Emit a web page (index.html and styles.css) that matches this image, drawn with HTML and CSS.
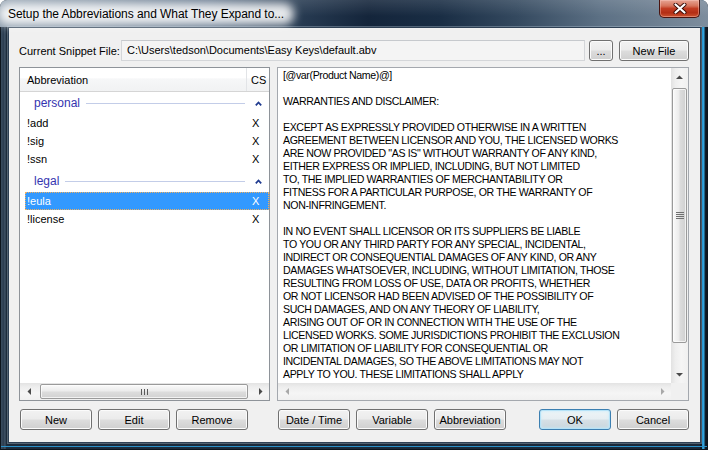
FILE: index.html
```html
<!DOCTYPE html>
<html>
<head>
<meta charset="utf-8">
<title>Setup the Abbreviations</title>
<link rel="stylesheet" href="styles.css">
</head>
<body>
<div class="window">
  <div class="titlebar">
    <span class="title">Setup the Abbreviations and What They Expand to...</span>
    <div class="close">
      <svg width="14" height="11" viewBox="0 0 14 11">
        <path d="M2.5 1.5 L11.5 9.5 M11.5 1.5 L2.5 9.5" stroke="#3a0b06" stroke-width="4" stroke-linecap="round" fill="none"/>
        <path d="M2.5 1.5 L11.5 9.5 M11.5 1.5 L2.5 9.5" stroke="#ffffff" stroke-width="2.2" stroke-linecap="round" fill="none"/>
      </svg>
    </div>
  </div>
  <div class="client">
    <div class="filerow">
      <span class="filelabel">Current Snippet File:</span>
      <div class="pathbox">C:\Users\tedson\Documents\Easy Keys\default.abv</div>
      <button class="btn btn-dots">...</button>
      <button class="btn btn-newfile">New File</button>
    </div>

    <div class="panels">
      <div class="list">
        <div class="list-head">
          <span class="col-abbr">Abbreviation</span>
          <span class="col-cs">CS</span>
        </div>
        <div class="list-body">
          <div class="group">
            <span>personal</span><span class="gline"></span>
            <svg class="chev" width="7" height="5" viewBox="0 0 7 5"><polyline points="0.8,4.4 3.5,1.4 6.2,4.4" stroke="#1f3a8f" stroke-width="1.7" fill="none"/></svg>
          </div>
          <div class="item"><span class="name">!add</span><span class="cs">X</span></div>
          <div class="item"><span class="name">!sig</span><span class="cs">X</span></div>
          <div class="item"><span class="name">!ssn</span><span class="cs">X</span></div>
          <div class="group group-next">
            <span>legal</span><span class="gline"></span>
            <svg class="chev" width="7" height="5" viewBox="0 0 7 5"><polyline points="0.8,4.4 3.5,1.4 6.2,4.4" stroke="#1f3a8f" stroke-width="1.7" fill="none"/></svg>
          </div>
          <div class="item selected"><span class="name">!eula</span><span class="cs">X</span></div>
          <div class="item"><span class="name">!license</span><span class="cs">X</span></div>
        </div>
        <div class="hscroll">
          <span class="arrow"><svg width="4" height="7" viewBox="0 0 4 7"><polygon points="4,0 4,7 0.5,3.5" fill="#4a4a4a"/></svg></span>
          <span class="hthumb"><svg width="7" height="6" viewBox="0 0 7 6"><path d="M0.5 0 V6 M3.5 0 V6 M6.5 0 V6" stroke="#5a5a5a" stroke-width="1"/></svg></span>
          <span class="htrack"></span>
          <span class="arrow"><svg width="4" height="7" viewBox="0 0 4 7"><polygon points="0,0 0,7 3.5,3.5" fill="#4a4a4a"/></svg></span>
        </div>
      </div>

      <div class="editor">
        <div class="text">[@var(Product Name)@]

WARRANTIES AND DISCLAIMER:

EXCEPT AS EXPRESSLY PROVIDED OTHERWISE IN A WRITTEN
AGREEMENT BETWEEN LICENSOR AND YOU, THE LICENSED WORKS
ARE NOW PROVIDED "AS IS" WITHOUT WARRANTY OF ANY KIND,
EITHER EXPRESS OR IMPLIED, INCLUDING, BUT NOT LIMITED
TO, THE IMPLIED WARRANTIES OF MERCHANTABILITY OR
FITNESS FOR A PARTICULAR PURPOSE, OR THE WARRANTY OF
NON-INFRINGEMENT.

IN NO EVENT SHALL LICENSOR OR ITS SUPPLIERS BE LIABLE
TO YOU OR ANY THIRD PARTY FOR ANY SPECIAL, INCIDENTAL,
INDIRECT OR CONSEQUENTIAL DAMAGES OF ANY KIND, OR ANY
DAMAGES WHATSOEVER, INCLUDING, WITHOUT LIMITATION, THOSE
RESULTING FROM LOSS OF USE, DATA OR PROFITS, WHETHER
OR NOT LICENSOR HAD BEEN ADVISED OF THE POSSIBILITY OF
SUCH DAMAGES, AND ON ANY THEORY OF LIABILITY,
ARISING OUT OF OR IN CONNECTION WITH THE USE OF THE
LICENSED WORKS. SOME JURISDICTIONS PROHIBIT THE EXCLUSION
OR LIMITATION OF LIABILITY FOR CONSEQUENTIAL OR
INCIDENTAL DAMAGES, SO THE ABOVE LIMITATIONS MAY NOT
APPLY TO YOU. THESE LIMITATIONS SHALL APPLY</div>
        <div class="vscroll">
          <span class="varrow"><svg width="7" height="4" viewBox="0 0 7 4"><polygon points="0,4 7,4 3.5,0.5" fill="#4a4a4a"/></svg></span>
          <span class="vthumb"><svg width="8" height="7" viewBox="0 0 8 7"><path d="M0 0.5 H8 M0 2.5 H8 M0 4.5 H8 M0 6.5 H8" stroke="#707070" stroke-width="1"/></svg></span>
          <span class="vtrack"></span>
          <span class="varrow"><svg width="7" height="4" viewBox="0 0 7 4"><polygon points="0,0 7,0 3.5,3.5" fill="#4a4a4a"/></svg></span>
        </div>
        <div class="hscroll">
          <span class="arrow"><svg width="4" height="7" viewBox="0 0 4 7"><polygon points="4,0 4,7 0.5,3.5" fill="#a8a8a8"/></svg></span>
          <span class="htrack"></span>
          <span class="arrow"><svg width="4" height="7" viewBox="0 0 4 7"><polygon points="0,0 0,7 3.5,3.5" fill="#a8a8a8"/></svg></span>
        </div>
        <div class="corner"></div>
      </div>
    </div>

    <div class="buttons">
      <div class="btn-group">
        <button class="btn">New</button>
        <button class="btn">Edit</button>
        <button class="btn">Remove</button>
      </div>
      <div class="btn-group">
        <button class="btn">Date / Time</button>
        <button class="btn">Variable</button>
        <button class="btn">Abbreviation</button>
        <button class="btn btn-default">OK</button>
        <button class="btn">Cancel</button>
      </div>
    </div>
  </div>
</div>
</body>
</html>
```

FILE: styles.css
```css
* { box-sizing: border-box; }

html, body { margin: 0; padding: 0; }

body {
  width: 708px;
  height: 450px;
  overflow: hidden;
  background: #ffffff;
  font-family: "Liberation Sans", Arial, sans-serif;
  font-size: 11px;
  color: #000;
}

.window {
  width: 708px;
  height: 450px;
  display: flex;
  flex-direction: column;
  border-radius: 7px 7px 0 0;
  overflow: hidden;
  background:
    linear-gradient(180deg, transparent 446px, #2b8fc6 446px, #2b8fc6 447px, transparent 447px),
    linear-gradient(90deg, #0e1822 0, #0e1822 1px, #3a4d60 1px, #2a3b4e 4px, #4a5e72 5px, #1c2b3b 6px,
      #1a2838 700px, #101a25 700px, #101a25 702px, #2590cc 702px, #36a8e0 704px, #12202e 705px, #0c141d 707px);
  box-shadow: inset 0 0 0 1px #0c141c;
}

/* ---------- title bar ---------- */
.titlebar {
  flex: none;
  height: 27px;
  display: flex;
  align-items: center;
  background:
    linear-gradient(180deg, rgba(255,255,255,0.12), rgba(255,255,255,0) 60%),
    linear-gradient(90deg, #8a9aaa 0%, #7a8b9d 12%, #536880 30%, #2a3e55 41%, #14253b 52%, #192d44 62%, #34495f 73%, #5d7185 85%, #7d8d9d 100%);
}

.title {
  position: relative;
  z-index: 0;
  margin-left: 8px;
  font-size: 12px;
  letter-spacing: -0.05px;
  color: #000;
  white-space: nowrap;
}

.title::before {
  content: "";
  position: absolute;
  left: -10px;
  right: -10px;
  top: -4px;
  bottom: -4px;
  background: rgba(255,255,255,0.88);
  border-radius: 10px;
  filter: blur(5px);
  z-index: -1;
}

.close {
  margin-left: auto;
  margin-right: 8px;
  align-self: flex-start;
  width: 41px;
  height: 18px;
  border: 1px solid #4a1410;
  border-top: none;
  border-radius: 0 0 5px 5px;
  background: linear-gradient(180deg, #e7a594 0%, #d6735b 35%, #c23c22 50%, #b32e15 75%, #cc5330 100%);
  box-shadow: inset 0 0 0 1px rgba(255,210,200,0.4);
  display: flex;
  align-items: center;
  justify-content: center;
}

/* ---------- client area ---------- */
.client {
  flex: none;
  height: 416px;
  margin: 0 7px 0 8px;
  background: #f0f0f0;
  border: 1px solid #2e4054;
  box-shadow: 0 0 0 1px rgba(190,205,220,0.35);
  padding: 12px 11px 12px 10px;
  display: flex;
  flex-direction: column;
}

.filerow {
  display: flex;
  align-items: center;
  height: 21px;
  flex: none;
}

.filelabel {
  width: 102px;
  flex: none;
  white-space: nowrap;
}

.pathbox {
  flex: 1;
  height: 21px;
  line-height: 19px;
  padding: 0 5px;
  background: #f4f4f4;
  border: 1px solid #d4d6d9;
  border-top-color: #c6c9cd;
  white-space: nowrap;
  overflow: hidden;
}

/* ---------- buttons ---------- */
.btn {
  height: 21px;
  width: 72px;
  padding: 0;
  margin: 0;
  font-family: "Liberation Sans", Arial, sans-serif;
  font-size: 11px;
  color: #000;
  border: 1px solid #707070;
  border-radius: 3px;
  background: linear-gradient(180deg, #f2f2f2 0%, #ebebeb 48%, #dddddd 52%, #cfcfcf 100%);
  box-shadow: inset 0 0 0 1px #fbfbfb;
  white-space: nowrap;
}

.btn-dots { width: 24px; margin-left: 4px; line-height: 12px; }
.btn-newfile { width: 70px; margin-left: 6px; }

.btn-default {
  margin-left: auto;
  border-color: #3c7fb1;
  background: linear-gradient(180deg, #eef4f7 0%, #e6eef2 48%, #d6e0e6 52%, #c9d5dc 100%);
  box-shadow: inset 0 0 0 1px #b5e2f7, inset 0 0 3px 1px #c6ecfb;
}

/* ---------- panels ---------- */
.panels {
  flex: none;
  margin-top: 6px;
  height: 334px;
  display: grid;
  grid-template-columns: 251px 412px;
  column-gap: 7px;
}

.list {
  border: 1px solid #8e9399;
  background: #fff;
  display: flex;
  flex-direction: column;
  overflow: hidden;
}

.list-head {
  flex: none;
  height: 24px;
  display: flex;
  border-bottom: 1px solid #d5d5d5;
  background: linear-gradient(180deg, #ffffff 0%, #ffffff 45%, #f6f7f8 46%, #f1f2f3 100%);
}

.col-abbr {
  width: 227px;
  padding: 2px 0 0 7px;
  line-height: 21px;
  border-right: 1px solid #e2e4e7;
}

.col-cs {
  padding: 2px 0 0 4px;
  line-height: 21px;
}

.list-body {
  flex: 1;
}

.group {
  height: 22px;
  display: flex;
  align-items: center;
  padding-left: 14px;
  padding-right: 7px;
  color: #3434b0;
  font-size: 12px;
}

.group-next { margin-top: 2px; }

.gline {
  flex: 1;
  height: 1px;
  margin: 1px 10px 0 6px;
  background: #c3cde8;
}

.chev { flex: none; }

.item {
  height: 18px;
  display: flex;
  align-items: center;
  margin-left: 5px;
  padding-left: 2px;
}

.item .name { width: 225px; }

.item.selected {
  background: #3399ff;
  color: #fff;
  outline: 1px dotted #f0b060;
  outline-offset: -1px;
}

/* ---------- scrollbars ---------- */
.hscroll {
  flex: none;
  height: 17px;
  display: flex;
  align-items: center;
  background: linear-gradient(180deg, #e3e3e3 0%, #eeeeee 25%, #f5f5f5 60%, #f0f0f0 100%);
}

.arrow {
  width: 17px;
  height: 17px;
  flex: none;
  display: flex;
  align-items: center;
  justify-content: center;
}

.hthumb {
  flex: none;
  width: 208px;
  height: 15px;
  margin-left: 3px;
  border: 1px solid #9a9a9a;
  border-radius: 2px;
  background: linear-gradient(180deg, #fafafa 0%, #ececec 45%, #dcdcdc 55%, #d2d2d2 100%);
  box-shadow: inset 0 0 0 1px rgba(255,255,255,0.7);
  display: flex;
  align-items: center;
  justify-content: center;
}

.htrack { flex: 1; }

.editor {
  border: 1px solid #a4a8ae;
  background: #fff;
  display: grid;
  grid-template-columns: 393px 17px;
  grid-template-rows: 315px 17px;
  overflow: hidden;
}

.text {
  padding: 1px 0 0 5px;
  white-space: pre;
  overflow: hidden;
  font-family: "Liberation Sans", Arial, sans-serif;
  font-size: 10.6px;
  letter-spacing: -0.38px;
  line-height: 13px;
  color: #000;
}

.vscroll {
  display: flex;
  flex-direction: column;
  align-items: center;
  background: linear-gradient(90deg, #e2e2e2 0%, #eeeeee 25%, #f5f5f5 60%, #f0f0f0 100%);
}

.varrow {
  width: 17px;
  height: 17px;
  flex: none;
  display: flex;
  align-items: center;
  justify-content: center;
}

.vthumb {
  flex: none;
  width: 15px;
  height: 255px;
  margin-top: 3px;
  border: 1px solid #9a9a9a;
  border-radius: 2px;
  background: linear-gradient(90deg, #fafafa 0%, #ececec 45%, #dcdcdc 55%, #d0d0d0 100%);
  box-shadow: inset 0 0 0 1px rgba(255,255,255,0.7);
  display: flex;
  align-items: center;
  justify-content: center;
}

.vtrack { flex: 1; }

.corner { background: #f0f0f0; }

/* ---------- bottom buttons ---------- */
.buttons {
  flex: none;
  margin-top: 8px;
  height: 21px;
  display: grid;
  grid-template-columns: 251px 412px;
  column-gap: 7px;
}

.btn-group {
  display: flex;
  gap: 6px;
  padding-left: 1px;
}
```
